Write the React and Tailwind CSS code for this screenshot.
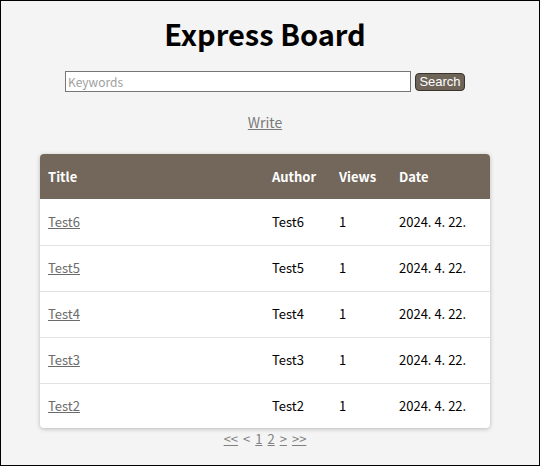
import React from "react";

const posts = ["Test6", "Test5", "Test4", "Test3", "Test2"];

export default function App() {
  return (
    <div className="box-border h-[466px] border border-black bg-[#f4f4f4] font-['Noto_Sans_CJK_KR','Noto_Sans',sans-serif] text-black">
      <div className="w-[528px]">
        <h1 className="pt-[12px] text-center text-[29px] font-bold leading-[40px]">Express Board</h1>

        <form className="mt-[18px] flex items-center justify-center gap-[4px]" onSubmit={(e) => e.preventDefault()}>
          <input
            type="text"
            placeholder="Keywords"
            className="box-border h-[21px] w-[346px] border border-[#767676] bg-white px-[2px] text-[12px] leading-[19px] placeholder:text-[#a0a0a0] focus:outline-none"
          />
          <button className="box-border h-[18px] w-[50px] rounded-[4px] border border-[#3a342d] bg-[#6e6458] font-['Liberation_Sans',Arial,sans-serif] text-[13px] leading-[16px] text-white">
            Search
          </button>
        </form>

        <div className="mt-[19px] text-center text-[14px] leading-[22px]">
          <a href="#" className="text-[#7a7a7a] underline">Write</a>
        </div>

        <div className="mx-auto mt-[21px] w-[450px] overflow-hidden rounded-[4px] bg-white shadow-[0_1px_4px_rgba(0,0,0,0.25)]">
          <table className="w-full border-collapse text-left text-[13px]">
            <thead>
              <tr className="h-[45px] bg-[#73675b] text-white">
                <th className="w-[224px] pl-[8px] font-bold">Title</th>
                <th className="w-[67px] pl-[8px] font-bold">Author</th>
                <th className="w-[60px] pl-[8px] font-bold">Views</th>
                <th className="pl-[8px] font-bold">Date</th>
              </tr>
            </thead>
            <tbody>
              {posts.map((p, i) => (
                <tr key={p} className={i < posts.length - 1 ? "h-[46px] border-b border-[#e2e2e2]" : "h-[45px]"}>
                  <td className="pl-[8px]">
                    <a href="#" className="text-[#6b6b6b] underline">{p}</a>
                  </td>
                  <td className="pl-[8px]">{p}</td>
                  <td className="pl-[8px]">1</td>
                  <td className="pl-[8px]">2024. 4. 22.</td>
                </tr>
              ))}
            </tbody>
          </table>
        </div>

        <div className="mt-[1px] flex justify-center gap-[5px] text-[13px] leading-[20px] text-[#808080]">
          <a href="#" className="underline">&lt;&lt;</a>
          <span>&lt;</span>
          <a href="#" className="underline">1</a>
          <a href="#" className="underline">2</a>
          <a href="#" className="underline">&gt;</a>
          <a href="#" className="underline">&gt;&gt;</a>
        </div>
      </div>
    </div>
  );
}
